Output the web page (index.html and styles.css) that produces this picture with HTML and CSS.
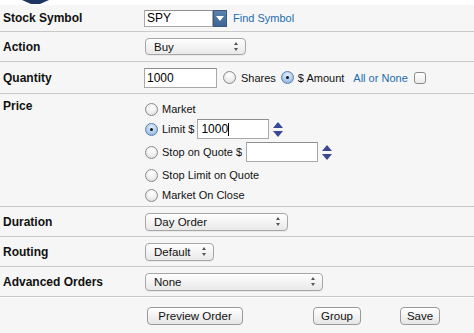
FILE: index.html
```html
<!DOCTYPE html>
<html>
<head>
<meta charset="utf-8">
<link rel="stylesheet" href="styles.css">
</head>
<body>
<div class="topbar">
  <svg class="pointer" width="27" height="4" viewBox="0 0 27 4"><polygon points="0,0 27,0 18,4 9,4" fill="#1d3560"/></svg>
</div>
<div class="form">
  <div class="row r1">
    <div class="label">Stock Symbol</div>
    <div class="ctrl">
      <div class="combo">
        <div class="input sym">SPY</div>
        <div class="dropbtn"><svg width="8" height="5" viewBox="0 0 8 5"><polygon points="0,0 8,0 4,5" fill="#fff"/></svg></div>
      </div>
      <a class="link find">Find Symbol</a>
    </div>
  </div>
  <div class="row r2">
    <div class="label">Action</div>
    <div class="ctrl">
      <div class="select w-action"><span>Buy</span><span class="arr"></span></div>
    </div>
  </div>
  <div class="row r3">
    <div class="label">Quantity</div>
    <div class="ctrl">
      <div class="input qty">1000</div>
      <span class="radio r-shares"></span><span class="txt t-shares">Shares</span>
      <span class="radio on r-amount"></span><span class="txt">$ Amount</span>
      <a class="link aon">All or None</a>
      <span class="check"></span>
    </div>
  </div>
  <div class="row price">
    <div class="label top">Price</div>
    <div class="opts">
      <div class="opt"><span class="radio"></span><span class="txt">Market</span></div>
      <div class="opt"><span class="radio on"></span><span class="txt">Limit $</span><div class="input px lim">1000<span class="caret"></span></div><span class="spin"></span></div>
      <div class="opt tall"><span class="radio"></span><span class="txt">Stop on Quote $</span><div class="input px stop"></div><span class="spin"></span></div>
      <div class="opt"><span class="radio"></span><span class="txt">Stop Limit on Quote</span></div>
      <div class="opt"><span class="radio"></span><span class="txt">Market On Close</span></div>
    </div>
  </div>
  <div class="row r29">
    <div class="label">Duration</div>
    <div class="ctrl"><div class="select w-dur"><span>Day Order</span><span class="arr"></span></div></div>
  </div>
  <div class="row r29">
    <div class="label">Routing</div>
    <div class="ctrl"><div class="select w-route"><span>Default</span><span class="arr"></span></div></div>
  </div>
  <div class="row r29">
    <div class="label">Advanced Orders</div>
    <div class="ctrl"><div class="select w-adv"><span>None</span><span class="arr"></span></div></div>
  </div>
  <div class="buttons">
    <div class="btn preview">Preview Order</div>
    <div class="btn group">Group</div>
    <div class="btn save">Save</div>
  </div>
</div>
</body>
</html>
```
FILE: styles.css
```css
html, body {
  margin: 0;
  padding: 0;
}
body {
  width: 474px;
  height: 333px;
  overflow: hidden;
  background: #f6f6f6;
  font-family: "Liberation Sans", Arial, Helvetica, sans-serif;
  color: #111;
}
.topbar {
  height: 5px;
  background: #fff;
  padding-left: 22px;
}
.pointer { display: block; }

.row {
  display: grid;
  grid-template-columns: 144px 1fr;
  border-bottom: 1px solid #c9c9c9;
  align-items: center;
}
.r1 { height: 26px; }
.r2 { height: 29px; }
.r3 { height: 31px; }
.r29 { height: 29px; }
.price { height: 112px; align-items: start; }

.label {
  padding-left: 3px;
  font-size: 12px;
  font-weight: bold;
  color: #111;
}
.label.top { padding-top: 5px; }

.ctrl {
  display: flex;
  align-items: center;
}

.input {
  box-sizing: border-box;
  background: #fff;
  border: 1px solid #a9a9a9;
  border-top-color: #8e8e8e;
  font-size: 12px;
  color: #000;
  padding-left: 2px;
  display: flex;
  align-items: center;
}
.sym { width: 69px; height: 17px; }
.combo { display: flex; }
.dropbtn {
  width: 14px;
  height: 17px;
  box-sizing: border-box;
  background: linear-gradient(#5c82ad, #3d6593);
  border: 1px solid #3a5a80;
  display: flex;
  align-items: center;
  justify-content: center;
}
.dropbtn svg { display: block; }
.link {
  color: #1b6db0;
  font-size: 11px;
}
.find { margin-left: 6px; }

.select {
  box-sizing: border-box;
  margin-left: 1px;
  height: 18px;
  border: 1px solid #a6a6a6;
  border-radius: 4px;
  background: linear-gradient(#ffffff, #f1f1f1 60%, #e9e9e9);
  box-shadow: 0 1px 0 rgba(0,0,0,0.05);
  font-size: 11.5px;
  color: #111;
  display: flex;
  align-items: center;
  justify-content: space-between;
  padding: 0 6px 0 8px;
}
.w-action { width: 101px; height: 17px; }
.w-dur { width: 143px; }
.w-route { width: 69px; }
.w-adv { width: 178px; }
.arr {
  width: 5px;
  height: 9px;
  position: relative;
}
.arr::before, .arr::after {
  content: "";
  position: absolute;
  left: 0;
  border-left: 2.5px solid transparent;
  border-right: 2.5px solid transparent;
}
.arr::before { top: 0; border-bottom: 3px solid #555; }
.arr::after { bottom: 0; border-top: 3px solid #555; }

.qty { width: 73px; height: 20px; }

.radio {
  box-sizing: border-box;
  display: inline-block;
  width: 13px;
  height: 13px;
  border-radius: 50%;
  border: 1px solid #8a8a8a;
  background: radial-gradient(circle at 50% 30%, #ffffff 0%, #f0f0f0 50%, #d6d6d6 100%);
  flex: none;
  position: relative;
}
.radio.on {
  border-color: #5a7fae;
  background: radial-gradient(circle at 50% 30%, #e3effb 0%, #a9c8ea 60%, #7fa6d6 100%);
}
.radio.on::after {
  content: "";
  position: absolute;
  left: 4px;
  top: 4px;
  width: 3px;
  height: 3px;
  border-radius: 50%;
  background: #111;
}
.txt {
  font-size: 11px;
  color: #111;
  margin-left: 4px;
  white-space: nowrap;
}
.r-shares { margin-left: 6px; }
.t-shares { margin-left: 5px; }
.r-amount { margin-left: 5px; }
.aon { margin-left: 9px; }
.check {
  box-sizing: border-box;
  display: inline-block;
  width: 12px;
  height: 12px;
  margin-left: 6px;
  border: 1px solid #8a8a8a;
  border-radius: 3px;
  background: linear-gradient(#fff, #ececec);
}

.opts {
  display: flex;
  flex-direction: column;
  padding-top: 5px;
}
.opt {
  height: 20px;
  display: flex;
  align-items: center;
  margin-left: 1px;
}
.opt.tall { height: 26px; }
.px {
  width: 72px;
  height: 20px;
  padding-left: 3px;
}
.lim { margin-left: 3px; }
.stop { margin-left: 4px; }
.caret {
  display: inline-block;
  width: 1px;
  height: 13px;
  background: #000;
}
.spin {
  width: 10px;
  height: 15px;
  margin-left: 4px;
  position: relative;
  flex: none;
}
.spin::before, .spin::after {
  content: "";
  position: absolute;
  left: 0;
  border-left: 5px solid transparent;
  border-right: 5px solid transparent;
}
.spin::before { top: 0; border-bottom: 6px solid #3a4795; }
.spin::after { bottom: 0; border-top: 6px solid #3a4795; }

.buttons {
  display: flex;
  align-items: center;
  height: 36px;
  padding-left: 147px;
  border-top: 1px solid #fdfdfd;
  box-sizing: border-box;
}
.btn {
  box-sizing: border-box;
  height: 18px;
  border: 1px solid #9a9a9a;
  border-radius: 4px;
  background: linear-gradient(#ffffff, #f0f0f0 60%, #e6e6e6);
  font-size: 11.5px;
  color: #111;
  display: flex;
  align-items: center;
  justify-content: center;
}
.preview { width: 96px; }
.group { width: 48px; margin-left: 70px; }
.save { width: 40px; margin-left: 39px; }
```
